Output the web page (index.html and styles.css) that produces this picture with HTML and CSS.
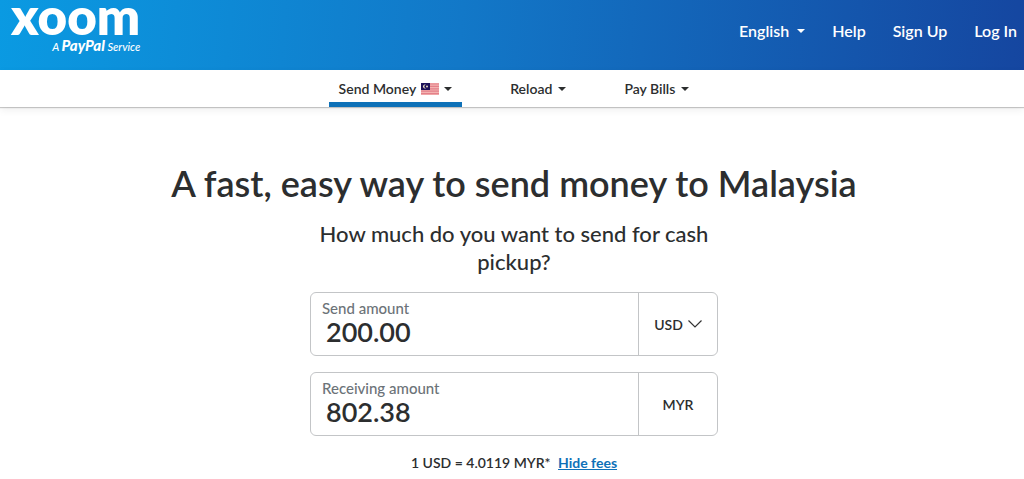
FILE: index.html
```html
<!DOCTYPE html>
<html lang="en">
<head>
<meta charset="utf-8">
<meta name="viewport" content="width=device-width, initial-scale=1">
<title>Xoom - Send money to Malaysia</title>
<link rel="stylesheet" href="styles.css">
</head>
<body>
<header class="topbar">
  <a class="logo" href="#">
    <span class="logo-name">xoom</span>
    <span class="logo-tag">A <b>PayPal</b> Service</span>
  </a>
  <div class="account">
    <button class="account-item" type="button">English <span class="caret"></span></button>
    <a class="account-item" href="#">Help</a>
    <a class="account-item" href="#">Sign Up</a>
    <a class="account-item" href="#">Log In</a>
  </div>
</header>
<nav class="tabs">
  <button class="tab tab-active" type="button">Send Money
    <svg class="flag" viewBox="0 0 18 12" aria-hidden="true">
      <rect width="18" height="12" fill="#f3b3b0"/>
      <path d="M0 1h18M0 3.4h18M0 5.8h18M0 8.2h18M0 10.6h18" stroke="#e4808a" stroke-width="1.2"/>
      <rect width="9" height="7" fill="#1d1259"/>
      <path d="M5 1.8a2 2 0 1 0 0 3.4a1.7 1.7 0 1 1 0-3.4z" fill="#e8dcc0"/>
      <circle cx="6" cy="3.5" r="1" fill="#e8dcc0"/>
    </svg>
    <span class="caret"></span>
  </button>
  <button class="tab" type="button">Reload <span class="caret"></span></button>
  <button class="tab" type="button">Pay Bills <span class="caret"></span></button>
</nav>
<main class="main">
  <h1 class="title">A fast, easy way to send money to Malaysia</h1>
  <form class="calc">
    <h2 class="subtitle">How much do you want to send for cash pickup?</h2>
    <div class="field">
      <div class="amount">
        <label class="label" for="send">Send amount</label>
        <input class="value" id="send" type="text" value="200.00">
      </div>
      <button class="currency" type="button">USD
        <svg class="chevron" viewBox="0 0 14 8" aria-hidden="true"><path d="M0.5 0.5L7 7L13.5 0.5" fill="none" stroke="#333" stroke-width="1.2"/></svg>
      </button>
    </div>
    <div class="field">
      <div class="amount">
        <label class="label" for="receive">Receiving amount</label>
        <input class="value" id="receive" type="text" value="802.38">
      </div>
      <span class="currency">MYR</span>
    </div>
    <p class="rate">1 USD = 4.0119 MYR* <a class="fees" href="#">Hide fees</a></p>
  </form>
</main>
</body>
</html>
```
FILE: styles.css
```css
* { box-sizing: border-box; }
body {
  margin: 0;
  background: #fff;
  color: #2c2e2f;
  font-family: Lato, "Open Sans", sans-serif;
  font-weight: 500;
}
button, input { font: inherit; color: inherit; background: none; border: 0; padding: 0; margin: 0; }
a { color: inherit; text-decoration: none; }

.topbar {
  display: flex;
  justify-content: space-between;
  align-items: flex-start;
  height: 70px;
  padding: 0 7px 0 11px;
  color: #fff;
  background: linear-gradient(95deg, #0a9ae2 0%, #1278c8 45%, #1546a0 100%);
}
.logo { display: flex; flex-direction: column; align-items: flex-end; gap: 4px; }
.logo-name { font-size: 51px; line-height: 31px; font-weight: 800; }
.logo-tag { font-size: 11px; line-height: 20px; font-style: italic; }
.logo-tag b { font-size: 15px; font-weight: 900; }
.account { display: flex; gap: 27px; padding-top: 20px; }
.account-item { display: flex; align-items: center; gap: 8px; font-size: 16px; line-height: 22px; font-weight: 600; }
.caret { border: 4px solid transparent; border-top-color: currentColor; border-bottom: 0; }

.tabs {
  display: flex;
  justify-content: center;
  gap: 38px;
  height: 37px;
  padding-left: 4px;
  box-shadow: 0 1px 1px #0003, 0 3px 8px #0001;
}
.tab {
  display: flex;
  align-items: center;
  gap: 6px;
  padding: 5px 10px 0;
  border-bottom: 5px solid transparent;
  font-size: 14px;
  line-height: 20px;
  font-weight: 600;
}
.tab-active { border-bottom-color: #0e71b8; gap: 5px; }
.flag { width: 18px; height: 12px; }

.main { padding: 52px 0 6px 4px; text-align: center; }
.title { margin: 0; font-size: 36px; line-height: 48px; font-weight: 600; }
.calc { width: 408px; max-width: 100%; margin: 0 auto; }
.subtitle { margin: 13px 0 16px; font-size: 22px; line-height: 28px; font-weight: 500; }
.field {
  display: flex;
  height: 64px;
  margin-bottom: 16px;
  border: 1px solid #c3c5c7;
  border-radius: 6px;
}
.amount { flex: 1; display: flex; flex-direction: column; padding: 5px 11px; text-align: left; }
.label { font-size: 15px; line-height: 20px; color: #6c7378; }
.value { width: 100%; padding-left: 4px; font-size: 27px; line-height: 28px; height: 28px; font-weight: 600; }
.currency {
  display: flex;
  align-items: center;
  justify-content: center;
  gap: 5px;
  width: 79px;
  border-left: 1px solid #c3c5c7;
  font-size: 14px;
  font-weight: 600;
}
.chevron { width: 14px; height: 8px; }
.rate { margin: 0; font-size: 14px; line-height: 22px; font-weight: 600; }
.fees { margin-left: 4px; color: #0e71b8; font-weight: 700; text-decoration: underline; }
```
